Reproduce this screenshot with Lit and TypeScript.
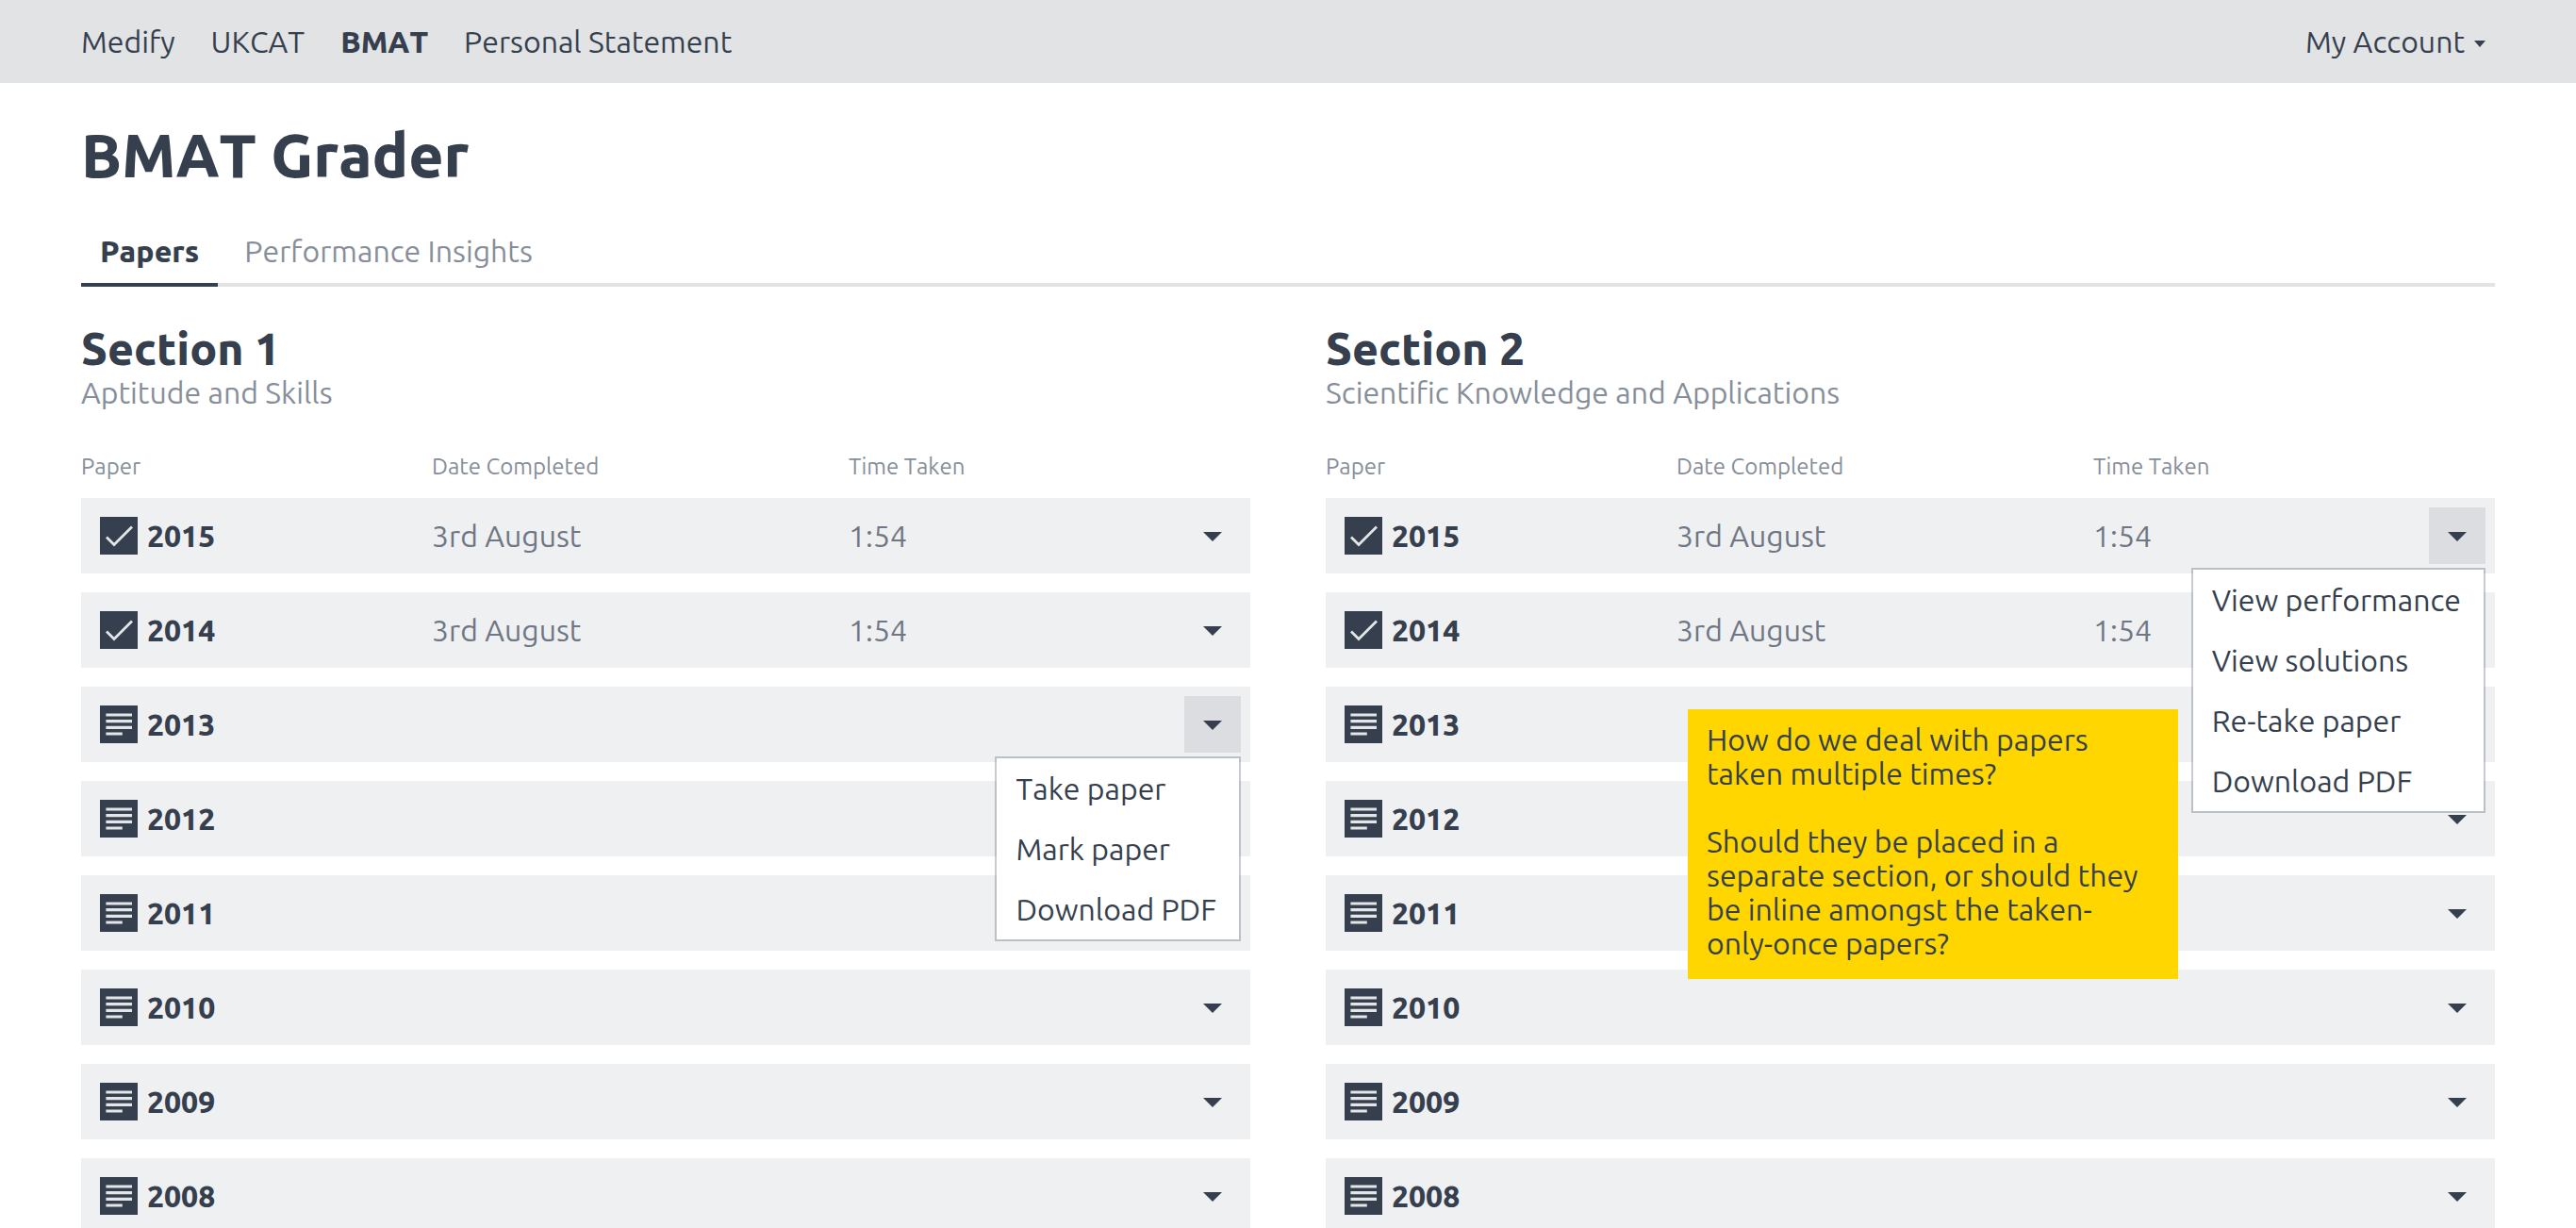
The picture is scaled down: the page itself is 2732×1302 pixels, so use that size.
import { LitElement, html, css, svg, nothing } from "lit";
import { customElement, property, state } from "lit/decorators.js";
import { classMap } from "lit/directives/class-map.js";

interface Paper {
  year: number;
  date?: string;
  time?: string;
}

const papers: Paper[] = [
  { year: 2015, date: "3rd August", time: "1:54" },
  { year: 2014, date: "3rd August", time: "1:54" },
  { year: 2013 },
  { year: 2012 },
  { year: 2011 },
  { year: 2010 },
  { year: 2009 },
  { year: 2008 },
];

const completedActions = ["View performance", "View solutions", "Re-take paper", "Download PDF"];
const pendingActions = ["Take paper", "Mark paper", "Download PDF"];

const checkMark = svg`<path d="M7 21.5 L15 29.5 L34 10.5" fill="none" stroke="#e3e5e6" stroke-width="2.8" />`;
const textLines = svg`<path d="M6.4 8.4H34V11.6H6.4Z M6.4 15H34V18.2H6.4Z M6.4 21.7H34V24.9H6.4Z M6.4 28.4H23.8V31.6H6.4Z" fill="#e3e5e6" />`;

@customElement("paper-section")
export class PaperSection extends LitElement {
  @property() heading = "";
  @property() subject = "";
  @property({ type: Number }) openYear = 0;

  static styles = css`
    :host {
      display: block;
    }
    .heading {
      margin: 0;
      font-size: 48px;
      line-height: 58px;
      font-weight: 800;
    }
    .subject {
      margin: 0 0 28px;
      line-height: 36px;
      color: #868e99;
    }
    .papers {
      width: 100%;
      table-layout: fixed;
      border-collapse: separate;
      border-spacing: 0 20px;
    }
    .col-paper {
      width: 30%;
    }
    .col-date {
      width: 35.65%;
    }
    .col-menu {
      width: 80px;
    }
    .column {
      padding: 0;
      font-size: 24px;
      line-height: 26px;
      font-weight: 400;
      text-align: left;
      color: #868e99;
    }
    .row {
      background: #eff0f2;
    }
    .year,
    .value {
      padding: 0;
      height: 80px;
      text-align: left;
    }
    .label {
      display: flex;
      align-items: center;
      gap: 10px;
      padding-left: 20px;
      font-weight: 800;
    }
    .badge {
      display: block;
      width: 40px;
      height: 40px;
      background: #353f4e;
    }
    .value {
      color: #707784;
    }
    .actions {
      position: relative;
      padding: 10px;
    }
    .toggle {
      display: flex;
      align-items: center;
      justify-content: center;
      width: 60px;
      height: 60px;
      padding: 0;
      border: 0;
      background: none;
      color: inherit;
      cursor: pointer;
    }
    .toggle.open {
      background: #dcdde1;
    }
    .menu {
      position: absolute;
      z-index: 2;
      top: 74px;
      right: 10px;
      margin: 0;
      padding: 0;
      list-style: none;
      border: 2px solid rgba(53, 63, 88, 0.27);
      background: #fff;
      background-clip: padding-box;
    }
    .item {
      display: block;
      width: 100%;
      padding: 14px 24px 14px 20px;
      border: 0;
      background: none;
      color: inherit;
      font: inherit;
      font-kerning: inherit;
      line-height: 36px;
      text-align: left;
      white-space: nowrap;
      cursor: pointer;
    }
  `;

  private toggle(year: number) {
    this.openYear = this.openYear === year ? 0 : year;
  }

  private renderRow(paper: Paper) {
    const open = this.openYear === paper.year;
    const actions = paper.date ? completedActions : pendingActions;
    return html`
      <tr class="row">
        <th class="year" scope="row">
          <span class="label">
            <svg class="badge" viewBox="0 0 40 40" aria-hidden="true">${paper.date ? checkMark : textLines}</svg>
            ${paper.year}
          </span>
        </th>
        <td class="value">${paper.date ?? nothing}</td>
        <td class="value">${paper.time ?? nothing}</td>
        <td class="actions">
          <button
            class=${classMap({ toggle: true, open })}
            type="button"
            aria-label="Actions"
            aria-expanded=${open ? "true" : "false"}
            @click=${() => this.toggle(paper.year)}
          >
            <svg width="20" height="12" viewBox="0 0 20 12" aria-hidden="true">
              <path d="M0 2H20L10 12Z" fill="currentColor" />
            </svg>
          </button>
          ${open
            ? html`<ul class="menu">
                ${actions.map((action) => html`<li><button class="item" type="button">${action}</button></li>`)}
              </ul>`
            : nothing}
        </td>
      </tr>
    `;
  }

  render() {
    return html`
      <h2 class="heading">${this.heading}</h2>
      <p class="subject">${this.subject}</p>
      <table class="papers">
        <colgroup>
          <col class="col-paper" />
          <col class="col-date" />
          <col />
          <col class="col-menu" />
        </colgroup>
        <thead>
          <tr>
            <th class="column" scope="col">Paper</th>
            <th class="column" scope="col">Date Completed</th>
            <th class="column" scope="col">Time Taken</th>
            <td class="column"></td>
          </tr>
        </thead>
        <tbody>
          ${papers.map((paper) => this.renderRow(paper))}
        </tbody>
      </table>
    `;
  }
}

@customElement("app-root")
export class AppRoot extends LitElement {
  @state() private tab = "Papers";

  static styles = css`
    :host {
      display: block;
      box-sizing: border-box;
      height: 100vh;
      overflow: hidden;
      background: #fff;
      color: #353f4e;
      font-family: Ubuntu, "Noto Sans", "Open Sans", sans-serif;
      font-size: 32px;
      font-kerning: none;
      line-height: 36px;
    }
    .bar {
      display: flex;
      align-items: center;
      justify-content: space-between;
      height: 88px;
      padding: 0 96px 0 86px;
      background: #e2e3e5;
    }
    .links {
      display: flex;
      gap: 38px;
    }
    .link {
      color: inherit;
      text-decoration: none;
    }
    .link.current {
      font-weight: 800;
    }
    .account {
      display: flex;
      align-items: center;
      gap: 10px;
      padding: 0;
      border: 0;
      background: none;
      color: inherit;
      font: inherit;
      font-kerning: inherit;
      cursor: pointer;
    }
    .page {
      padding: 36px 86px 0;
    }
    .title {
      margin: 0 0 26px;
      font-size: 64px;
      line-height: 80px;
      font-weight: 800;
    }
    .tabs {
      display: flex;
      gap: 8px;
      box-shadow: inset 0 -4px #e2e3e5;
    }
    .tab {
      padding: 16px 20px 14px;
      border-bottom: 4px solid transparent;
      line-height: 40px;
      color: #868e99;
      text-decoration: none;
    }
    .tab.current {
      border-color: #353f4e;
      color: inherit;
      font-weight: 800;
    }
    .sections {
      display: grid;
      grid-template-columns: repeat(2, minmax(0, 1fr));
      gap: 80px;
      padding-top: 36px;
    }
    .section {
      position: relative;
    }
    .note {
      position: absolute;
      z-index: 3;
      top: 412px;
      left: 384px;
      box-sizing: border-box;
      width: 520px;
      padding: 14px 28px 20px 20px;
      background: #ffd600;
    }
    .note-text {
      margin: 0;
    }
    .note-text + .note-text {
      margin-top: 36px;
    }
  `;

  private renderTab(name: string) {
    const current = this.tab === name;
    return html`<a
      class=${classMap({ tab: true, current })}
      href="#"
      @click=${(event: Event) => {
        event.preventDefault();
        this.tab = name;
      }}
      >${name}</a
    >`;
  }

  render() {
    return html`
      <header class="bar">
        <nav class="links">
          <a class="link" href="#">Medify</a>
          <a class="link" href="#">UKCAT</a>
          <a class="link current" href="#" aria-current="page">BMAT</a>
          <a class="link" href="#">Personal Statement</a>
        </nav>
        <button class="account" type="button">
          My Account
          <svg width="12" height="12" viewBox="0 0 12 12" aria-hidden="true">
            <path d="M0 5H12L6 12Z" fill="currentColor" />
          </svg>
        </button>
      </header>
      <main class="page">
        <h1 class="title">BMAT Grader</h1>
        <nav class="tabs">${this.renderTab("Papers")}${this.renderTab("Performance Insights")}</nav>
        <div class="sections">
          <div class="section">
            <paper-section heading="Section 1" subject="Aptitude and Skills" .openYear=${2013}></paper-section>
          </div>
          <div class="section">
            <paper-section
              heading="Section 2"
              subject="Scientific Knowledge and Applications"
              .openYear=${2015}
            ></paper-section>
            <aside class="note">
              <p class="note-text">How do we deal with papers taken multiple times?</p>
              <p class="note-text">
                Should they be placed in a separate section, or should they be inline amongst the taken-only-once
                papers?
              </p>
            </aside>
          </div>
        </div>
      </main>
    `;
  }
}
